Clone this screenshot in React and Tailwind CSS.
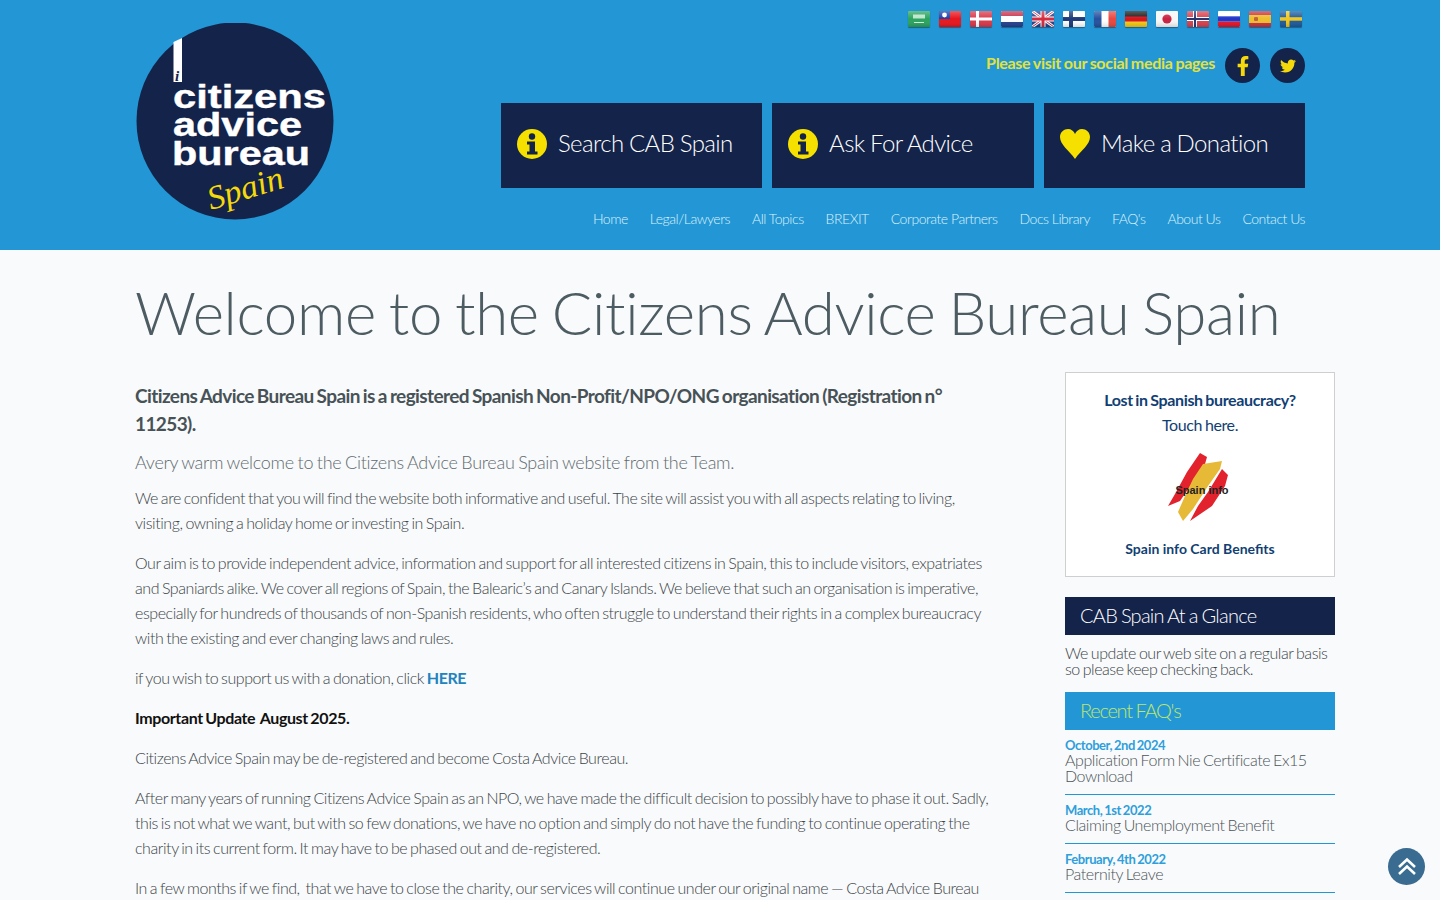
import React from "react";
import { FaFacebookF, FaTwitter } from "react-icons/fa";

const Flag = ({ children }) => (
	<svg width="22" height="16" viewBox="0 0 22 16" className="rounded-[1px] shadow-[0_1px_1px_rgba(0,0,0,0.35)]">
		<defs>
			<linearGradient id="gloss" x1="0" y1="0" x2="0" y2="1">
				<stop offset="0" stopColor="#fff" stopOpacity="0.3" />
				<stop offset="0.5" stopColor="#fff" stopOpacity="0" />
				<stop offset="1" stopColor="#000" stopOpacity="0.15" />
			</linearGradient>
		</defs>
		{children}
		<rect width="22" height="16" fill="url(#gloss)" />
	</svg>
);

const flags = [
	<Flag key="sa"><rect width="22" height="16" fill="#2aa35f" /><rect x="5" y="3.5" width="12" height="4" fill="#d6f0dd" opacity="0.85" /><rect x="6" y="11" width="10" height="1" fill="#d6f0dd" /></Flag>,
	<Flag key="tw"><rect width="22" height="16" fill="#e8141c" /><rect width="11" height="8" fill="#1c3fa8" /><circle cx="5.5" cy="4" r="2.4" fill="#fff" /></Flag>,
	<Flag key="dk"><rect width="22" height="16" fill="#d9384a" /><rect x="6" width="3" height="16" fill="#fff" /><rect y="6.5" width="22" height="3" fill="#fff" /></Flag>,
	<Flag key="nl"><rect width="22" height="16" fill="#fff" /><rect width="22" height="5" fill="#c8324a" /><rect y="11" width="22" height="5" fill="#24408e" /></Flag>,
	<Flag key="uk">
		<rect width="22" height="16" fill="#27408f" />
		<path d="M0 0L22 16M22 0L0 16" stroke="#fff" strokeWidth="3" />
		<path d="M0 0L22 16M22 0L0 16" stroke="#d42a3c" strokeWidth="1" />
		<path d="M11 0V16M0 8H22" stroke="#fff" strokeWidth="5" />
		<path d="M11 0V16M0 8H22" stroke="#d42a3c" strokeWidth="3" />
	</Flag>,
	<Flag key="fi"><rect width="22" height="16" fill="#fff" /><rect x="6" width="4" height="16" fill="#1b3a78" /><rect y="6" width="22" height="4" fill="#1b3a78" /></Flag>,
	<Flag key="fr"><rect width="22" height="16" fill="#fff" /><rect width="7.5" height="16" fill="#24509e" /><rect x="14.5" width="7.5" height="16" fill="#e8473f" /></Flag>,
	<Flag key="de"><rect width="22" height="16" fill="#d8121c" /><rect width="22" height="5.5" fill="#1a1a1a" /><rect y="10.5" width="22" height="5.5" fill="#f6c914" /></Flag>,
	<Flag key="jp"><rect width="22" height="16" fill="#f7f7f7" /><circle cx="11" cy="8" r="4.6" fill="#c8203f" /></Flag>,
	<Flag key="no"><rect width="22" height="16" fill="#d9404e" /><rect x="6" width="4" height="16" fill="#fff" /><rect y="6" width="22" height="4" fill="#fff" /><rect x="7" width="2" height="16" fill="#23346f" /><rect y="7" width="22" height="2" fill="#23346f" /></Flag>,
	<Flag key="ru"><rect width="22" height="16" fill="#fff" /><rect y="5.3" width="22" height="5.4" fill="#1f35c9" /><rect y="10.7" width="22" height="5.3" fill="#e3142a" /></Flag>,
	<Flag key="es"><rect width="22" height="16" fill="#c8313a" /><rect y="4" width="22" height="8" fill="#efbd2c" /><rect x="5" y="6" width="4" height="4" rx="1" fill="#c0603a" /></Flag>,
	<Flag key="se"><rect width="22" height="16" fill="#1c5a9c" /><rect x="6" width="3.5" height="16" fill="#f1c61c" /><rect y="6.2" width="22" height="3.5" fill="#f1c61c" /></Flag>,
];

const navLinks = ["Home", "Legal/Lawyers", "All Topics", "BREXIT", "Corporate Partners", "Docs Library", "FAQ's", "About Us", "Contact Us"];

const faqs = [
	{ date: "October, 2nd 2024", title: "Application Form Nie Certificate Ex15 Download" },
	{ date: "March, 1st 2022", title: "Claiming Unemployment Benefit" },
	{ date: "February, 4th 2022", title: "Paternity Leave" },
];

const InfoIcon = () => (
	<svg width="30" height="30" viewBox="0 0 30 30" className="shrink-0">
		<circle cx="15" cy="15" r="15" fill="#f5e000" />
		<circle cx="15" cy="7.5" r="3.2" fill="#14234a" />
		<path d="M10 12.5H18V22.5H20.5V25.5H10V22.5H12.5V15.5H10Z" fill="#14234a" />
	</svg>
);

const HeartIcon = () => (
	<svg width="30" height="30" viewBox="0 0 30 30" className="shrink-0">
		<path d="M15 30C9 21 0 16 0 8C0 3 4 0 8 0C11 0 14 2 15 5C16 2 19 0 22 0C26 0 30 3 30 8C30 16 21 21 15 30Z" fill="#f5e000" />
	</svg>
);

const Logo = () => (
	<svg width="200" height="198" viewBox="0 0 200 198" className="shrink-0">
		<circle cx="100" cy="98" r="98.5" fill="#14234a" />
		<path d="M38.5 19L47 15V59H38.5Z" fill="#fff" />
		<text x="40" y="58" fontSize="15" fontWeight="700" fontStyle="italic" fontFamily="'Liberation Serif', serif" fill="#14234a">i</text>
		<g fontFamily="'Liberation Sans', sans-serif" fontWeight="700" fill="#fff" fontSize="33" stroke="#fff" strokeWidth="0.4">
			<text x="38" y="85" textLength="153" lengthAdjust="spacingAndGlyphs">citizens</text>
			<text x="38" y="113" textLength="129" lengthAdjust="spacingAndGlyphs">advice</text>
			<text x="37" y="142" textLength="138" lengthAdjust="spacingAndGlyphs">bureau</text>
		</g>
		<text x="76" y="187" fontSize="33" fontStyle="italic" fontFamily="'Liberation Serif', serif" fill="#f5d90a" transform="rotate(-17 76 187)" textLength="78" lengthAdjust="spacingAndGlyphs">Spain</text>
	</svg>
);

const SpainInfo = () => (
	<svg width="66" height="70" viewBox="0 0 66 70" className="mx-auto">
		<path d="M33 1L40 5L38 12L26 30L13 49L1 54L8 42L20 20Z" fill="#e2222d" />
		<path d="M36 12L55 9L53 17L41 34L26 57L16 69L11 60L18 44L26 27Z" fill="#e6b936" />
		<path d="M55 17L61 23L58 34L45 54L23 69L31 54L41 40Z" fill="#e2222d" />
		<text x="35" y="42" textAnchor="middle" fontSize="11" fontWeight="700" fontFamily="'Liberation Sans', sans-serif" fill="#222">Spain info</text>
	</svg>
);

export default function App() {
	return (
		<div className="relative h-[900px] overflow-hidden bg-[#f9fafb] font-['Lato',sans-serif] font-light text-[#3a4448]">
			<header className="h-[250px] bg-[#2397d5]">
				<div className="mx-auto flex w-[1170px]">
					<div className="pt-[23px]">
						<Logo />
					</div>
					<div className="flex-1">
						<div className="flex justify-end gap-[9px] pt-[11px] pr-[3px]">{flags}</div>
						<div className="mt-[21px] flex items-center justify-end">
							<span className="mr-[10px] pb-[6px] text-base font-bold tracking-[-0.3px] [word-spacing:-0.7px] text-[#e4e13c]">Please visit our social media pages</span>
							<span className="flex h-[35px] w-[35px] items-center justify-center rounded-full bg-[#14234a] text-xl text-[#f5d90a]"><FaFacebookF /></span>
							<span className="ml-[10px] flex h-[35px] w-[35px] items-center justify-center rounded-full bg-[#14234a] text-base text-[#f5d90a]"><FaTwitter /></span>
						</div>
						<div className="mt-[20px] flex justify-end gap-[10px] text-2xl tracking-[-0.6px] [word-spacing:-0.5px] text-white">
							<a className="flex h-[85px] w-[261px] items-center gap-[11px] bg-[#14234a] pb-[3px] pl-4"><InfoIcon /><span className="pb-[3px]">Search CAB Spain</span></a>
							<a className="flex h-[85px] w-[262px] items-center gap-[11px] bg-[#14234a] pb-[3px] pl-4"><InfoIcon /><span className="pb-[3px]">Ask For Advice</span></a>
							<a className="flex h-[85px] w-[261px] items-center gap-[11px] bg-[#14234a] pb-[3px] pl-4"><HeartIcon /><span className="pb-[3px]">Make a Donation</span></a>
						</div>
						<nav className="mt-[22px] flex justify-end gap-[22px] text-sm leading-[18px] tracking-[-0.47px] text-[#dff1fb]">
							{navLinks.map((link) => <a key={link}>{link}</a>)}
						</nav>
					</div>
				</div>
			</header>

			<main className="ml-[135px] w-[1200px]">
				<h1 className="pt-[23px] pb-[3px] text-[60px] leading-[78px] tracking-[-0.35px] [word-spacing:-3px] whitespace-nowrap text-[#4d5c62]">Welcome to the Citizens Advice Bureau Spain</h1>
				<div className="mt-[18px] flex">
					<div className="w-[860px] shrink-0 text-base leading-[25px] tracking-[-0.44px] [word-spacing:-1px]">
						<h4 className="pt-[10px] text-[19px] leading-[28px] font-bold tracking-[-0.6px] text-[#475257]">Citizens Advice Bureau Spain is a registered Spanish Non-Profit/NPO/ONG organisation (Registration n° 11253).</h4>
						<h5 className="mt-[12px] text-lg leading-[25px] tracking-[-0.27px] text-[#5f6b70]">Avery warm welcome to the Citizens Advice Bureau Spain website from the Team.</h5>
						<p className="mt-[10px]">We are confident that you will find the website both informative and useful. The site will assist you with all aspects relating to living, visiting, owning a holiday home or investing in Spain.</p>
						<p className="mt-[15px]">Our aim is to provide independent advice, information and support for all interested citizens in Spain, this to include visitors, expatriates and Spaniards alike. We cover all regions of Spain, the Balearic’s and Canary Islands. We believe that such an organisation is imperative, especially for hundreds of thousands of non-Spanish residents, who often struggle to understand their rights in a complex bureaucracy with the existing and ever changing laws and rules.</p>
						<p className="mt-[15px]">if you wish to support us with a donation, click <a className="font-bold text-[#2383bd]">HERE</a></p>
						<p className="mt-[15px] font-bold tracking-[-0.38px] text-[#111]">Important Update&nbsp; August 2025.</p>
						<p className="mt-[15px]">Citizens Advice Spain may be de-registered and become Costa Advice Bureau.</p>
						<p className="mt-[15px]">After many years of running Citizens Advice Spain as an NPO, we have made the difficult decision to possibly have to phase it out. Sadly, this is not what we want, but with so few donations, we have no option and simply do not have the funding to continue operating the charity in its current form. It may have to be phased out and de-registered.</p>
						<p className="mt-[15px]">In a few months if we find,&nbsp; that we have to close the charity, our services will continue under our original name — Costa Advice Bureau</p>
					</div>

					<aside className="ml-[70px] w-[270px]">
						<div className="h-[205px] border border-[#cfcfcf] bg-white pt-[14px] text-center text-[#123f73]">
							<p className="text-base leading-[25px] font-bold tracking-[-0.35px] [word-spacing:-1px]">Lost in Spanish bureaucracy?</p>
							<p className="text-base leading-[25px] font-normal tracking-[-0.4px] [word-spacing:-0.8px]">Touch here.</p>
							<div className="mt-[15px]"><SpainInfo /></div>
							<p className="mt-[17px] text-sm leading-[20px] font-bold">Spain info Card Benefits</p>
						</div>

						<h3 className="mt-[20px] h-[38px] bg-[#14234a] pl-[15px] text-xl leading-[37px] tracking-[-0.75px] [word-spacing:-0.8px] text-white">CAB Spain At a Glance</h3>
						<p className="mt-[10px] text-base leading-4 tracking-[-0.45px] [word-spacing:-1px]">We update our web site on a regular basis so please keep checking back.</p>

						<h3 className="mt-[15px] h-[38px] bg-[#2397d5] pl-[15px] text-xl leading-[37px] tracking-[-1.25px] [word-spacing:-0.5px] text-[#bfe56a]">Recent FAQ's</h3>
						<ul className="mt-[9px]">
							{faqs.map((faq) => (
								<li key={faq.date} className="mb-[9px] border-b border-[#2397d5] pb-[10px] text-base leading-4 tracking-[-0.42px] [word-spacing:-1px] text-[#4a5458]">
									<div className="text-[13px] leading-[13px] font-bold tracking-[-0.45px] [word-spacing:-0.8px] text-[#2e9fdc]">{faq.date}</div>
									<div>{faq.title}</div>
								</li>
							))}
						</ul>
					</aside>
				</div>
			</main>

			<a className="absolute top-[848px] left-[1388px] flex h-[37px] w-[37px] items-center justify-center rounded-full bg-[#3a6b90]">
				<svg width="20" height="20" viewBox="0 0 20 20" fill="none" stroke="#fff" strokeWidth="2.6">
					<path d="M2 10L10 2.5L18 10" />
					<path d="M2 17L10 9.5L18 17" />
				</svg>
			</a>
		</div>
	);
}
